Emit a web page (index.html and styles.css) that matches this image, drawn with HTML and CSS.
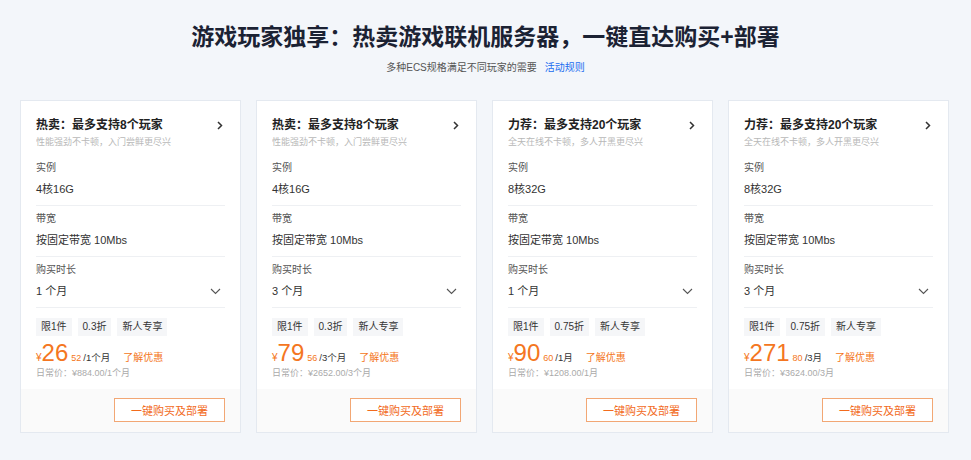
FILE: index.html
```html
<!DOCTYPE html>
<html lang="zh-CN">
<head>
<meta charset="utf-8">
<title>游戏联机服务器</title>
<link rel="stylesheet" href="styles.css">
</head>
<body>
<div class="page">
  <header class="hero">
    <h1 class="hero-title">游戏玩家独享：热卖游戏联机服务器，一键直达购买+部署</h1>
    <p class="hero-sub">多种ECS规格满足不同玩家的需要<a class="hero-link" href="#">活动规则</a></p>
  </header>

  <section class="cards">
    <article class="card">
      <div class="card-body">
        <div class="card-head">
          <div class="card-title-row"><span class="card-title">热卖：最多支持8个玩家</span><svg class="chev-right" width="6" height="9" viewBox="0 0 6 9"><path d="M1 1l3.5 3.5L1 8" fill="none" stroke="#333" stroke-width="1.5"/></svg></div>
          <div class="card-desc">性能强劲不卡顿，入门尝鲜更尽兴</div>
        </div>
        <div class="field"><div class="field-label">实例</div><div class="field-value">4核16G</div></div>
        <div class="field"><div class="field-label">带宽</div><div class="field-value">按固定带宽 10Mbs</div></div>
        <div class="field"><div class="field-label">购买时长</div><div class="field-value field-select"><span>1 个月</span><svg class="chev-down" width="11" height="7" viewBox="0 0 11 7"><path d="M1 1l4.5 4.5L10 1" fill="none" stroke="#555" stroke-width="1.1"/></svg></div></div>
        <div class="tags"><span class="tag">限1件</span><span class="tag">0.3折</span><span class="tag">新人专享</span></div>
        <div class="price-row"><span class="cur">¥</span><span class="int">26</span><span class="dec">52</span><span class="unit">/1个月</span><a class="promo" href="#">了解优惠</a></div>
        <div class="orig">日常价：¥884.00/1个月</div>
      </div>
      <div class="card-foot"><button class="buy">一键购买及部署</button></div>
    </article>

    <article class="card">
      <div class="card-body">
        <div class="card-head">
          <div class="card-title-row"><span class="card-title">热卖：最多支持8个玩家</span><svg class="chev-right" width="6" height="9" viewBox="0 0 6 9"><path d="M1 1l3.5 3.5L1 8" fill="none" stroke="#333" stroke-width="1.5"/></svg></div>
          <div class="card-desc">性能强劲不卡顿，入门尝鲜更尽兴</div>
        </div>
        <div class="field"><div class="field-label">实例</div><div class="field-value">4核16G</div></div>
        <div class="field"><div class="field-label">带宽</div><div class="field-value">按固定带宽 10Mbs</div></div>
        <div class="field"><div class="field-label">购买时长</div><div class="field-value field-select"><span>3 个月</span><svg class="chev-down" width="11" height="7" viewBox="0 0 11 7"><path d="M1 1l4.5 4.5L10 1" fill="none" stroke="#555" stroke-width="1.1"/></svg></div></div>
        <div class="tags"><span class="tag">限1件</span><span class="tag">0.3折</span><span class="tag">新人专享</span></div>
        <div class="price-row"><span class="cur">¥</span><span class="int">79</span><span class="dec">56</span><span class="unit">/3个月</span><a class="promo" href="#">了解优惠</a></div>
        <div class="orig">日常价：¥2652.00/3个月</div>
      </div>
      <div class="card-foot"><button class="buy">一键购买及部署</button></div>
    </article>

    <article class="card">
      <div class="card-body">
        <div class="card-head">
          <div class="card-title-row"><span class="card-title">力荐：最多支持20个玩家</span><svg class="chev-right" width="6" height="9" viewBox="0 0 6 9"><path d="M1 1l3.5 3.5L1 8" fill="none" stroke="#333" stroke-width="1.5"/></svg></div>
          <div class="card-desc">全天在线不卡顿，多人开黑更尽兴</div>
        </div>
        <div class="field"><div class="field-label">实例</div><div class="field-value">8核32G</div></div>
        <div class="field"><div class="field-label">带宽</div><div class="field-value">按固定带宽 10Mbs</div></div>
        <div class="field"><div class="field-label">购买时长</div><div class="field-value field-select"><span>1 个月</span><svg class="chev-down" width="11" height="7" viewBox="0 0 11 7"><path d="M1 1l4.5 4.5L10 1" fill="none" stroke="#555" stroke-width="1.1"/></svg></div></div>
        <div class="tags"><span class="tag">限1件</span><span class="tag">0.75折</span><span class="tag">新人专享</span></div>
        <div class="price-row"><span class="cur">¥</span><span class="int">90</span><span class="dec">60</span><span class="unit">/1月</span><a class="promo" href="#">了解优惠</a></div>
        <div class="orig">日常价：¥1208.00/1月</div>
      </div>
      <div class="card-foot"><button class="buy">一键购买及部署</button></div>
    </article>

    <article class="card">
      <div class="card-body">
        <div class="card-head">
          <div class="card-title-row"><span class="card-title">力荐：最多支持20个玩家</span><svg class="chev-right" width="6" height="9" viewBox="0 0 6 9"><path d="M1 1l3.5 3.5L1 8" fill="none" stroke="#333" stroke-width="1.5"/></svg></div>
          <div class="card-desc">全天在线不卡顿，多人开黑更尽兴</div>
        </div>
        <div class="field"><div class="field-label">实例</div><div class="field-value">8核32G</div></div>
        <div class="field"><div class="field-label">带宽</div><div class="field-value">按固定带宽 10Mbs</div></div>
        <div class="field"><div class="field-label">购买时长</div><div class="field-value field-select"><span>3 个月</span><svg class="chev-down" width="11" height="7" viewBox="0 0 11 7"><path d="M1 1l4.5 4.5L10 1" fill="none" stroke="#555" stroke-width="1.1"/></svg></div></div>
        <div class="tags"><span class="tag">限1件</span><span class="tag">0.75折</span><span class="tag">新人专享</span></div>
        <div class="price-row"><span class="cur">¥</span><span class="int">271</span><span class="dec">80</span><span class="unit">/3月</span><a class="promo" href="#">了解优惠</a></div>
        <div class="orig">日常价：¥3624.00/3月</div>
      </div>
      <div class="card-foot"><button class="buy">一键购买及部署</button></div>
    </article>
  </section>
</div>
</body>
</html>
```

FILE: styles.css
```css
* { box-sizing: border-box; }
html, body {
  margin: 0;
  padding: 0;
  background: #f3f6fa;
  font-family: "Liberation Sans", "Noto Sans CJK SC", sans-serif;
  color: #333;
}
.page {
  width: 971px;
  height: 460px;
  overflow: hidden;
}
.hero {
  padding-top: 22px;
  text-align: center;
}
.hero-title {
  margin: 0;
  font-size: 23px;
  line-height: 30px;
  font-weight: 700;
  color: #1b2233;
}
.hero-sub {
  margin: 10px 0 0;
  font-size: 10px;
  line-height: 12px;
  color: #555;
}
.hero-link {
  margin-left: 8px;
  color: #1a6cf0;
  text-decoration: none;
}
.cards {
  display: grid;
  grid-template-columns: repeat(4, 221px);
  column-gap: 15px;
  padding-left: 20px;
  margin-top: 26px;
}
.card {
  background: #fff;
  border: 1px solid #e4e9f0;
  display: flex;
  flex-direction: column;
}
.card-body {
  padding: 16px 15px 10px;
}
.card-head {
  padding-bottom: 6px;
}
.card-title-row {
  display: flex;
  align-items: center;
  justify-content: space-between;
  height: 16px;
}
.card-title {
  font-size: 12px;
  line-height: 16px;
  font-weight: 700;
  color: #222;
}
.chev-right { margin-right: 2px; }
.card-desc {
  margin-top: 3px;
  font-size: 9px;
  line-height: 13px;
  color: #b8b8b8;
  white-space: nowrap;
  overflow: hidden;
}
.field {
  padding: 6px 0 7px;
  border-bottom: 1px solid #eef0f3;
}
.field-label {
  font-size: 10px;
  line-height: 14px;
  color: #555;
}
.field-value {
  margin-top: 5px;
  font-size: 11px;
  line-height: 18px;
  color: #333;
}
.field-select {
  display: flex;
  align-items: center;
  justify-content: space-between;
  padding-right: 4px;
}
.tags {
  display: flex;
  gap: 6px;
  margin-top: 10px;
}
.tag {
  height: 18px;
  line-height: 18px;
  padding: 0 5px;
  font-size: 10px;
  color: #333;
  background: #f5f6f8;
}
.price-row {
  display: flex;
  align-items: baseline;
  margin-top: 5px;
  height: 24px;
  color: #f47621;
}
.cur {
  font-size: 10px;
}
.int {
  font-size: 24px;
  line-height: 24px;
}
.dec {
  font-size: 9px;
  margin-left: 3px;
}
.unit {
  font-size: 9.5px;
  color: #333;
  margin-left: 2px;
}
.promo {
  font-size: 10px;
  color: #f47621;
  text-decoration: none;
  margin-left: 13px;
}
.orig {
  margin-top: 2px;
  font-size: 9px;
  line-height: 12px;
  color: #aaa;
}
.card-foot {
  background: #fafafa;
  padding: 9px 15px 10px;
  display: flex;
  justify-content: flex-end;
}
.buy {
  width: 111px;
  height: 24px;
  border: 1px solid #f2a774;
  background: #fff;
  color: #f26b1d;
  font-family: "Liberation Sans", "Noto Sans CJK SC", sans-serif;
  font-size: 11px;
  padding: 0;
  cursor: pointer;
}
```
